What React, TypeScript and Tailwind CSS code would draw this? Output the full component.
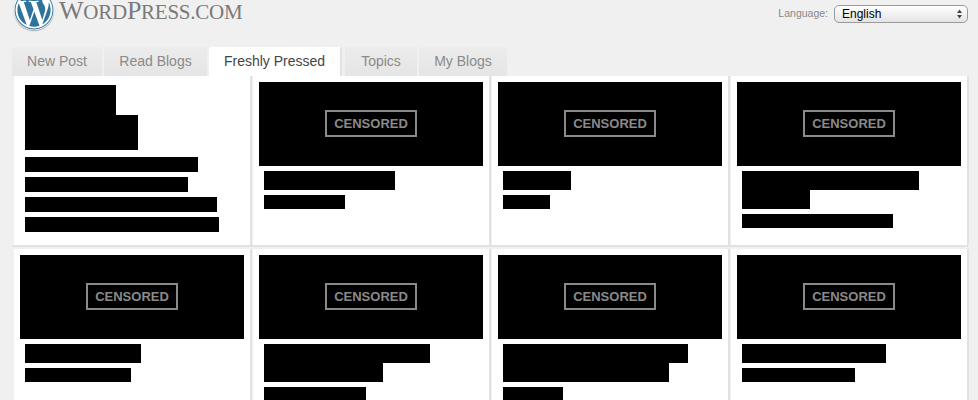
import { FaWordpress } from "react-icons/fa";

type Post = { head: number[]; sub: number[] };

const rowOne: Post[] = [
  { head: [131], sub: [81] },
  { head: [68], sub: [47] },
  { head: [177, 68], sub: [151] },
];

const rowTwo: Post[] = [
  { head: [116], sub: [106] },
  { head: [166, 119], sub: [102] },
  { head: [185, 166], sub: [60] },
  { head: [144], sub: [113] },
];

function Tab({ label, className }: { label: string; className: string }) {
  return (
    <div className={`flex items-center justify-center rounded-t-[2px] bg-gradient-to-b from-[#ececec] to-[#e5e5e5] text-[14px] text-[#8a8a8a] ${className}`}>
      {label}
    </div>
  );
}

function Card({ post }: { post: Post }) {
  return (
    <div className="h-[169px] w-[238px] shrink-0 border-r-2 border-[#e2e2e2] bg-white p-[6px]">
      <div className="flex h-[84px] w-[224px] items-center justify-center bg-black">
        <span className="mb-[1px] border-2 border-[#8a8a8a] px-[7px] py-[3px] text-[13px] font-bold leading-[17px] text-[#8a8a8a]">
          CENSORED
        </span>
      </div>
      <div className="px-[5px] pt-[5px]">
        {post.head.map((w, i) => (
          <div key={i} className="h-[19px] bg-black" style={{ width: w }} />
        ))}
        {post.sub.map((w, i) => (
          <div key={i} className="mt-[5px] h-[14px] bg-black" style={{ width: w }} />
        ))}
      </div>
    </div>
  );
}

function IntroCard() {
  return (
    <div className="h-[169px] w-[238px] shrink-0 border-r-2 border-[#e2e2e2] bg-white pl-[11px] pt-[9px]">
      <div className="h-[30px] w-[91px] bg-black" />
      <div className="h-[35px] w-[113px] bg-black" />
      <div className="mt-[7px] flex flex-col gap-[5px]">
        <div className="h-[15px] w-[173px] bg-black" />
        <div className="h-[15px] w-[163px] bg-black" />
        <div className="h-[15px] w-[192px] bg-black" />
        <div className="h-[15px] w-[194px] bg-black" />
      </div>
    </div>
  );
}

export default function App() {
  return (
    <div className="h-[400px] w-[978px] overflow-hidden bg-[#f0f0f0] font-['Liberation_Sans',Arial,sans-serif]">
      <header className="flex h-[47px] items-start justify-between pl-[14px] pr-[10px]">
        <div className="flex items-start">
          <div className="mt-[-10px] h-[40px] w-[40px] rounded-full bg-white text-[#2f739c] shadow-[0_1px_1px_rgba(0,0,0,0.3)]">
            <FaWordpress size={40} />
          </div>
          <div className="ml-[5px] whitespace-nowrap font-['Liberation_Serif',serif] text-[26px] leading-[22px] tracking-[-0.25px] text-[#7a7a7a]">
            W<span className="text-[21px]">ORD</span>P<span className="text-[21px]">RESS.COM</span>
          </div>
        </div>
        <div className="mt-[5px] flex items-center">
          <span className="mr-[6px] text-[10.5px] text-[#888888]">Language:</span>
          <div className="relative h-[18px] w-[134px]">
            <select className="block h-[18px] w-[134px] appearance-none rounded-[5px] border border-[#9a9a9a] bg-gradient-to-b from-white to-[#e4e4e4] pl-[7px] text-[12px] leading-[16px] text-black">
              <option>English</option>
            </select>
            <svg className="absolute right-[5px] top-[4px]" width="7" height="10" viewBox="0 0 7 10">
              <path d="M3.5 0.5L6 4H1Z M3.5 9.5L1 6H6Z" fill="#444444" />
            </svg>
          </div>
        </div>
      </header>

      <nav className="flex h-[29px] gap-[2px] pl-[12px]">
        <Tab label="New Post" className="w-[90px]" />
        <Tab label="Read Blogs" className="w-[103px]" />
        <div className="mr-[1px] flex w-[133px] items-center justify-center rounded-t-[2px] border-r-2 border-[#e2e2e2] bg-white text-[14px] text-[#444444]">
          Freshly Pressed
        </div>
        <Tab label="Topics" className="w-[72px]" />
        <Tab label="My Blogs" className="w-[88px]" />
      </nav>

      <main className="ml-[12px] w-[956px]">
        <div className="flex gap-[1px] border-b-2 border-[#e2e2e2] pl-[2px]">
          <IntroCard />
          {rowOne.map((p, i) => (
            <Card key={i} post={p} />
          ))}
        </div>
        <div className="mt-[2px] flex gap-[1px] pl-[2px]">
          {rowTwo.map((p, i) => (
            <Card key={i} post={p} />
          ))}
        </div>
      </main>
    </div>
  );
}
